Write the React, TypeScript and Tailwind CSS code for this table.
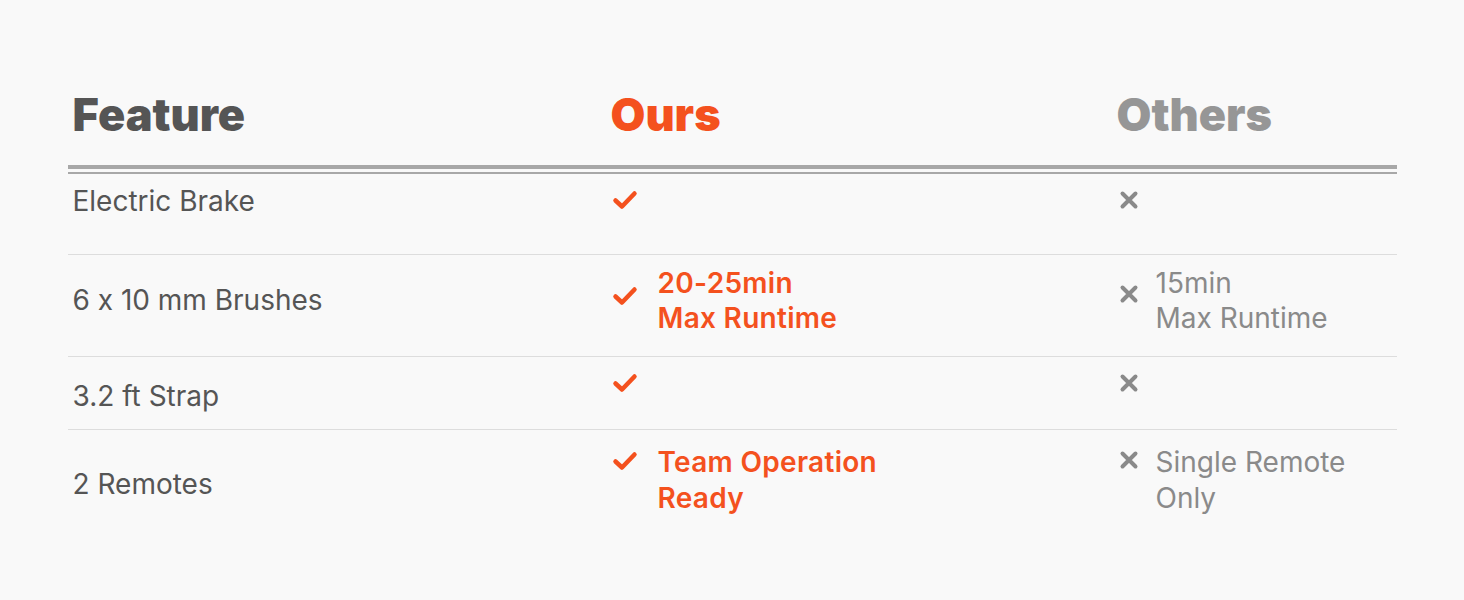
import React from 'react';

const Check = () => (
  <svg width="26" height="20" viewBox="0 0 26 20" className="shrink-0">
    <path d="M3.5 10.5 L10 16.5 L22.5 3.5" fill="none" stroke="#f4511e" strokeWidth="4.5" strokeLinecap="round" strokeLinejoin="round" />
  </svg>
);

const Cross = () => (
  <svg width="20" height="20" viewBox="0 0 20 20" className="shrink-0">
    <path d="M3.5 3.5 L16.5 16.5 M16.5 3.5 L3.5 16.5" fill="none" stroke="#8a8a8a" strokeWidth="4" strokeLinecap="round" />
  </svg>
);

const App = () => {
  return (
    <div className="min-h-[600px] w-full bg-[#f9f9f9] font-['Inter','Noto_Sans',sans-serif] [font-feature-settings:'calt'_0]">
      <div className="mx-auto w-[1329px] pt-[92px]">
        {/* header */}
        <div className="grid grid-cols-[538px_506px_1fr] text-[45px] leading-none font-black">
          <div className="pl-[5px] text-[#555555]">Feature</div>
          <div className="pl-[5px] text-[#f4511e]">Ours</div>
          <div className="pl-[5px] text-[#969696]">Others</div>
        </div>
        <div className="mt-[28px] h-[4px] bg-[#a8a8a8]" />
        <div className="mt-[3px] h-[2px] bg-[#a8a8a8]" />

        <div className="text-[28px] leading-[35px]">
          {/* Electric Brake */}
          <div className="grid h-[81px] grid-cols-[538px_506px_1fr] border-b border-[#dddddd]">
            <div className="pl-[5px] pt-[10px] text-[#555555]">Electric Brake</div>
            <div className="pl-[6px] pt-[16px]"><Check /></div>
            <div className="pl-[7px] pt-[16px]"><Cross /></div>
          </div>

          {/* Brushes */}
          <div className="grid h-[102px] grid-cols-[538px_506px_1fr] border-b border-[#dddddd]">
            <div className="pl-[5px] pt-[28px] text-[#555555]">6 x 10 mm Brushes</div>
            <div className="flex items-start gap-[20px] pl-[6px] pt-[11px]">
              <div className="pt-[20px]"><Check /></div>
              <div className="font-semibold tracking-[0.3px] text-[#f4511e]">20-25min<br />Max Runtime</div>
            </div>
            <div className="flex items-start gap-[17px] pl-[7px] pt-[11px]">
              <div className="pt-[18px]"><Cross /></div>
              <div className="text-[#8a8a8a]">15min<br />Max Runtime</div>
            </div>
          </div>

          {/* Strap */}
          <div className="grid h-[73px] grid-cols-[538px_506px_1fr] border-b border-[#dddddd]">
            <div className="pl-[5px] pt-[22px] text-[#555555]">3.2 ft Strap</div>
            <div className="pl-[6px] pt-[16px]"><Check /></div>
            <div className="pl-[7px] pt-[16px]"><Cross /></div>
          </div>

          {/* Remotes */}
          <div className="grid h-[110px] grid-cols-[538px_506px_1fr]">
            <div className="pl-[5px] pt-[37px] text-[#555555]">2 Remotes</div>
            <div className="flex items-start gap-[20px] pl-[6px] pt-[14px]">
              <div className="pt-[7px]"><Check /></div>
              <div className="font-semibold tracking-[0.3px] leading-[36px] text-[#f4511e]">Team Operation<br />Ready</div>
            </div>
            <div className="flex items-start gap-[17px] pl-[7px] pt-[14px]">
              <div className="pt-[6px]"><Cross /></div>
              <div className="leading-[36px] text-[#8a8a8a]">Single Remote<br />Only</div>
            </div>
          </div>
        </div>
      </div>
    </div>
  );
};

export default App;
